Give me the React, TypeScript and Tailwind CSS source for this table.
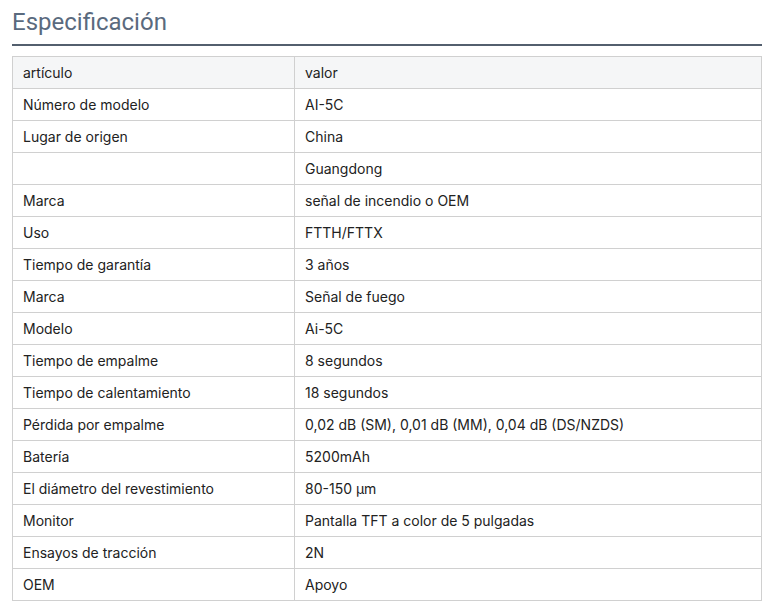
import React from "react";

const rows: [string, string][] = [
  ["Número de modelo", "AI-5C"],
  ["Lugar de origen", "China"],
  ["", "Guangdong"],
  ["Marca", "señal de incendio o OEM"],
  ["Uso", "FTTH/FTTX"],
  ["Tiempo de garantía", "3 años"],
  ["Marca", "Señal de fuego"],
  ["Modelo", "Ai-5C"],
  ["Tiempo de empalme", "8 segundos"],
  ["Tiempo de calentamiento", "18 segundos"],
  ["Pérdida por empalme", "0,02 dB (SM), 0,01 dB (MM), 0,04 dB (DS/NZDS)"],
  ["Batería", "5200mAh"],
  ["El diámetro del revestimiento", "80-150 μm"],
  ["Monitor", "Pantalla TFT a color de 5 pulgadas"],
  ["Ensayos de tracción", "2N"],
  ["OEM", "Apoyo"],
];

export default function App() {
  return (
    <div className="w-[767px] h-[607px] bg-white pl-3 pr-[5px]">
      <h2
        className="text-[24px] leading-[28px] pt-[8px] pb-[8px] text-[#5a6a7e] border-b-2 border-[#535f6e]"
        style={{ fontFamily: "Roboto, 'Liberation Sans', sans-serif" }}
      >
        Especificación
      </h2>
      <table
        className="mt-[10px] w-[750px] border-collapse text-[14px] text-[#222]"
        style={{ fontFamily: "Inter, 'Liberation Sans', sans-serif" }}
      >
        <tbody>
          <tr className="bg-[#f5f6f7] h-[32px]">
            <td className="border border-[#d0d0d0] pl-[10px] w-[282px]">artículo</td>
            <td className="border border-[#d0d0d0] pl-[10px]">valor</td>
          </tr>
          {rows.map(([a, b], i) => (
            <tr key={i} className="h-[32px]">
              <td className="border border-[#d0d0d0] pl-[10px]">{a}</td>
              <td className="border border-[#d0d0d0] pl-[10px]">{b}</td>
            </tr>
          ))}
        </tbody>
      </table>
    </div>
  );
}
